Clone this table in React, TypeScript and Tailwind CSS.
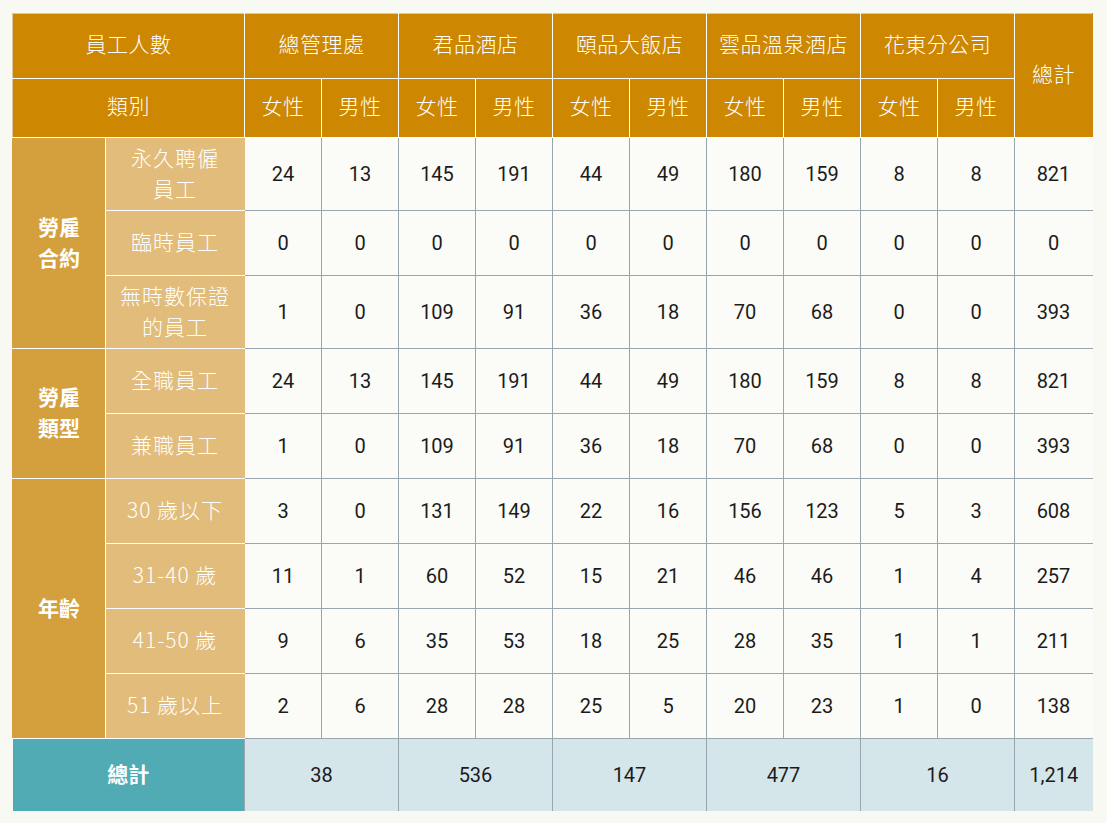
import React from 'react';

/* ---------------- data ---------------- */
const companies = ['總管理處', '君品酒店', '頤品大飯店', '雲品溫泉酒店', '花東分公司'];

type Row = { label: string[]; values: number[]; total: string };

const groups: { name: string[]; rows: Row[] }[] = [
  {
    name: ['勞雇', '合約'],
    rows: [
      { label: ['永久聘僱', '員工'], values: [24, 13, 145, 191, 44, 49, 180, 159, 8, 8], total: '821' },
      { label: ['臨時員工'], values: [0, 0, 0, 0, 0, 0, 0, 0, 0, 0], total: '0' },
      { label: ['無時數保證', '的員工'], values: [1, 0, 109, 91, 36, 18, 70, 68, 0, 0], total: '393' },
    ],
  },
  {
    name: ['勞雇', '類型'],
    rows: [
      { label: ['全職員工'], values: [24, 13, 145, 191, 44, 49, 180, 159, 8, 8], total: '821' },
      { label: ['兼職員工'], values: [1, 0, 109, 91, 36, 18, 70, 68, 0, 0], total: '393' },
    ],
  },
  {
    name: ['年齡'],
    rows: [
      { label: ['30 歲以下'], values: [3, 0, 131, 149, 22, 16, 156, 123, 5, 3], total: '608' },
      { label: ['31-40 歲'], values: [11, 1, 60, 52, 15, 21, 46, 46, 1, 4], total: '257' },
      { label: ['41-50 歲'], values: [9, 6, 35, 53, 18, 25, 28, 35, 1, 1], total: '211' },
      { label: ['51 歲以上'], values: [2, 6, 28, 28, 25, 5, 20, 23, 1, 0], total: '138' },
    ],
  },
];

const footer = ['38', '536', '147', '477', '16'];

/* row heights picked off the screenshot */
const rowH: Record<string, string> = {
  '永久聘僱': 'h-[73px]',
  '無時數保證': 'h-[73px]',
};

const head = 'border border-white bg-[#cd8700] text-white font-light text-[21px] tracking-[0.5px] pb-[4px]';
const num =
  "border border-[#9ba5b0] text-center text-[20px] text-[#1b1b1b] font-['Roboto','Noto_Sans',sans-serif]";

export default function App() {
  return (
    <div
      className="min-h-screen bg-[#f9f9f4] pt-[13px] pl-[12px]"
      style={{ fontFamily: '"Noto Sans CJK TC", "Noto Sans", sans-serif' }}
    >
      <table className="table-fixed border-collapse w-[1080px]">
        <colgroup>
          <col className="w-[93px]" />
          <col className="w-[139px]" />
          {Array.from({ length: 10 }).map((_, i) => (
            <col key={i} className="w-[77px]" />
          ))}
          <col className="w-[78px]" />
        </colgroup>
        <thead>
          <tr className="h-[65px]">
            <th colSpan={2} className={`${head} border-l-[#d9c9a8] border-t-[#d9c9a8]`}>員工人數</th>
            {companies.map((c) => (
              <th key={c} colSpan={2} className={`${head} border-t-[#d9c9a8]`}>
                {c}
              </th>
            ))}
            <th rowSpan={2} className={`${head} border-t-[#d9c9a8] border-r-[#cd8700]`}>總計</th>
          </tr>
          <tr className="h-[59px]">
            <th colSpan={2} className={`${head} border-l-[#d9c9a8]`}>類別</th>
            {companies.map((c) => (
              <React.Fragment key={c}>
                <th className={head}>女性</th>
                <th className={head}>男性</th>
              </React.Fragment>
            ))}
          </tr>
        </thead>
        <tbody className="bg-[#fbfbf7]">
          {groups.map((g) =>
            g.rows.map((r, ri) => (
              <tr key={r.label.join('')} className={rowH[r.label[0]] ?? 'h-[65px]'}>
                {ri === 0 && (
                  <td
                    rowSpan={g.rows.length}
                    className="border border-white border-l-[#d4a03e] bg-[#d4a03e] text-white font-bold text-[21px] text-center leading-[31px] pb-[3px]"
                  >
                    {g.name.map((n) => (
                      <div key={n}>{n}</div>
                    ))}
                  </td>
                )}
                <td className="border border-white border-r-[#e2bc7a] bg-[#e2bc7a] text-white font-light text-[21px] text-center leading-[31px] tracking-[1px] pb-[3px]">
                  {r.label.map((l) => (
                    <div key={l}>{l}</div>
                  ))}
                </td>
                {r.values.map((v, i) => (
                  <td key={i} className={num}>
                    {v}
                  </td>
                ))}
                <td className={`${num} border-r-transparent`}>{r.total}</td>
              </tr>
            ))
          )}
        </tbody>
        <tfoot>
          <tr className="h-[72px]">
            <td colSpan={2} className="bg-[#50abb5] text-white font-bold text-[21px] text-center pb-[3px]">
              總計
            </td>
            {footer.map((f, i) => (
              <td key={i} colSpan={2} className={`${num} bg-[#d5e6ea] border-b-0`}>
                {f}
              </td>
            ))}
            <td className={`${num} bg-[#d5e6ea] border-b-0 border-r-0`}>1,214</td>
          </tr>
        </tfoot>
      </table>
    </div>
  );
}
